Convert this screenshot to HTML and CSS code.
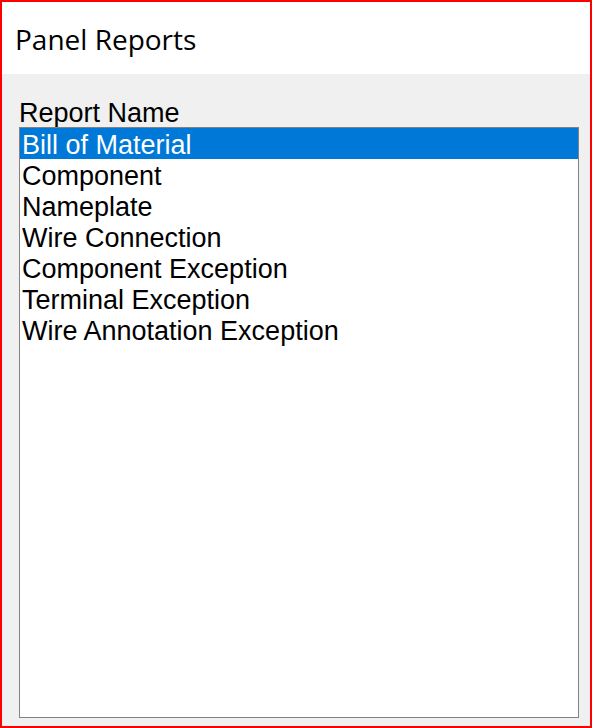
FILE: index.html
```html
<!DOCTYPE html>
<html>
<head>
<meta charset="utf-8">
<link rel="stylesheet" href="styles.css">
</head>
<body>
<div class="window">
  <div class="header"><span class="title">Panel Reports</span></div>
  <div class="content">
    <div class="label">Report Name</div>
    <ul class="listbox">
      <li class="item selected">Bill of Material</li>
      <li class="item">Component</li>
      <li class="item">Nameplate</li>
      <li class="item">Wire Connection</li>
      <li class="item">Component Exception</li>
      <li class="item">Terminal Exception</li>
      <li class="item">Wire Annotation Exception</li>
    </ul>
  </div>
</div>
</body>
</html>
```
FILE: styles.css
```css
html, body {
  margin: 0;
  padding: 0;
  background: #ffffff;
}
.window {
  width: 592px;
  height: 728px;
  box-sizing: border-box;
  border: 2px solid #ff0000;
  display: flex;
  flex-direction: column;
  background: #f0f0f0;
}
.header {
  height: 72px;
  background: #ffffff;
  box-sizing: border-box;
  padding: 18px 0 0 13px;
}
.title {
  font-family: "Open Sans", "Noto Sans", sans-serif;
  font-size: 28px;
  line-height: 38px;
  color: #000000;
  display: block;
}
.content {
  flex: 1;
  display: flex;
  flex-direction: column;
  padding: 25px 11px 8px 17px;
  min-height: 0;
}
.label {
  font-family: "Liberation Sans", Arial, sans-serif;
  font-size: 27px;
  line-height: 28px;
  color: #000000;
}
.listbox {
  flex: 1;
  margin: 0;
  padding: 0;
  list-style: none;
  background: #ffffff;
  border: 1px solid #828282;
}
.item {
  font-family: "Liberation Sans", Arial, sans-serif;
  font-size: 27px;
  line-height: 31px;
  height: 31px;
  box-sizing: border-box;
  padding: 2px 0 0 2px;
  color: #000000;
  white-space: nowrap;
}
.item.selected {
  background: #0078d7;
  color: #ffffff;
}
```
